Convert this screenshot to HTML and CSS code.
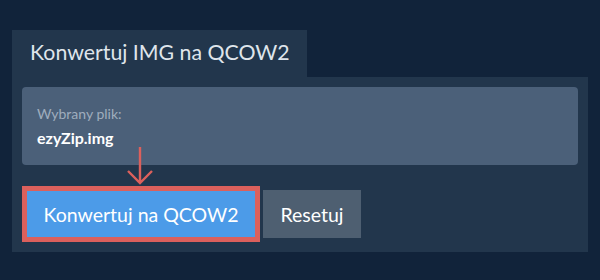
FILE: index.html
```html
<!DOCTYPE html>
<html lang="pl">
<head>
    <meta charset="UTF-8">
    <meta name="viewport" content="width=device-width, initial-scale=1.0">
    <title>Konwertuj IMG na QCOW2</title>
    <link rel="stylesheet" href="styles.css">
</head>
<body>
    <div id="converter">
    <div id="tab">Konwertuj IMG na QCOW2</div>
    <div id="panel">
        <div class="file_box">
            <p class="label">Wybrany plik:</p>
            <p class="file_name">ezyZip.img</p>
        </div>
        <svg class="arrow" width="28" height="38" viewBox="0 0 28 38">
            <path d="M13 0 V36 M1 24 L13 36 L25 24" fill="none" stroke="#dc605c" stroke-width="2.4"/>
        </svg>
        <div class="actions">
            <button class="convert">Konwertuj na QCOW2</button>
            <button class="reset">Resetuj</button>
        </div>
    </div>
    </div>
</body>
</html>
```
FILE: styles.css
```css
body
{
    margin: 0;
    background-color: #11233a;
    font-family: Lato, 'Open Sans', sans-serif;
}
#converter
{
    padding: 30px 12px 0 12px;
}
#tab
{
    display: inline-block;
    height: 47px;
    line-height: 45px;
    padding: 0 17px 0 18px;
    background-color: #22364c;
    color: #dfe5eb;
    font-size: 21.3px;
}
#panel
{
    position: relative;
    background-color: #22364c;
    padding: 10px 10px 14px 10px;
}
.file_box
{
    background-color: #4b6079;
    border-radius: 4px;
    height: 78px;
    padding: 0 15px;
    box-sizing: border-box;
    overflow: hidden;
}
.label
{
    margin: 18px 0 0 0;
    font-size: 14px;
    color: #9fadbd;
}
.file_name
{
    margin: 6px 0 0 0;
    font-size: 16px;
    font-weight: bold;
    color: #ffffff;
}
.arrow
{
    position: absolute;
    left: 115px;
    top: 70px;
}
.actions
{
    display: flex;
    gap: 7px;
    margin-top: 25px;
    padding-left: 4px;
}
.actions button
{
    height: 48px;
    border: none;
    color: #ffffff;
    font-family: Lato, 'Open Sans', sans-serif;
    font-size: 19.5px;
    cursor: pointer;
}
.convert
{
    width: 230px;
    background-color: #4c9be8;
    outline: 5px solid #dc605c;
    outline-offset: -1px;
}
.reset
{
    width: 98px;
    background-color: #4e5f71;
    color: #e6eaee;
}
```
